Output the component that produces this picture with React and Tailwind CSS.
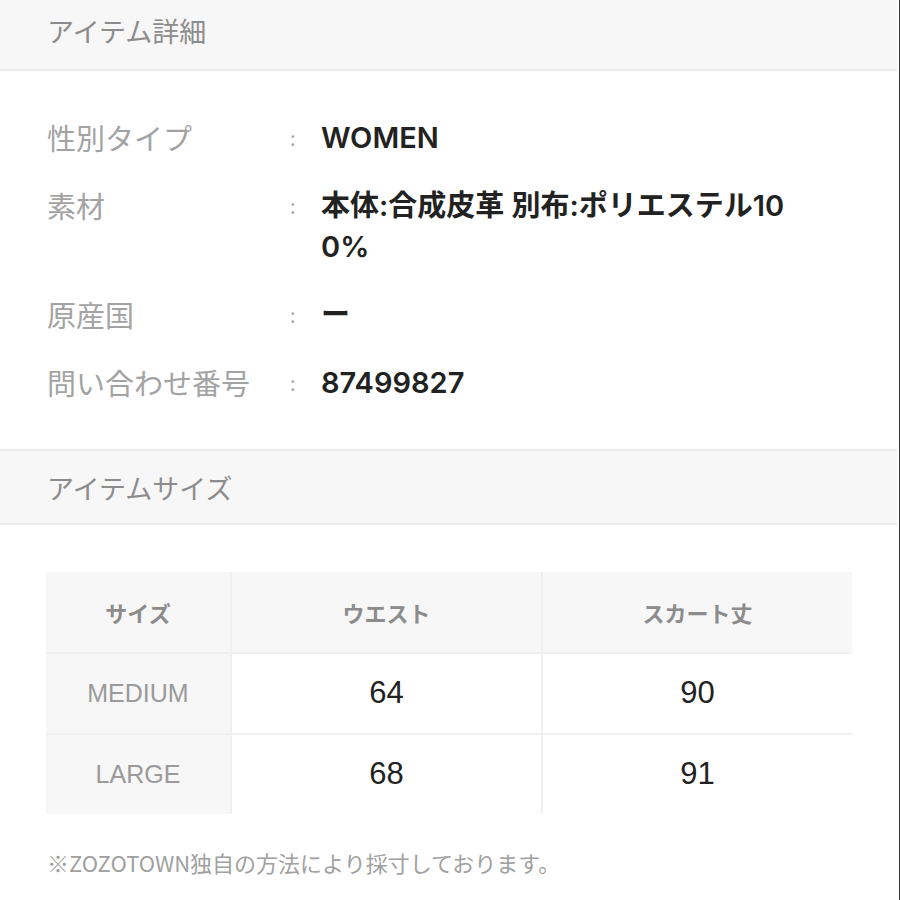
import React from "react";

const font = "font-['Liberation_Sans','Noto_Sans_CJK_JP',sans-serif]";
const jp = "font-['Noto_Sans_CJK_JP',sans-serif]";
const val = "font-['Inter','Noto_Sans_CJK_JP',sans-serif]";

const details = [
  { label: "性別タイプ", value: "WOMEN" },
  { label: "素材", value: "本体:合成皮革 別布:ポリエステル100%" },
  { label: "原産国", value: "ー" },
  { label: "問い合わせ番号", value: "87499827" },
];

const sizes = [
  { name: "MEDIUM", waist: "64", length: "90" },
  { name: "LARGE", waist: "68", length: "91" },
];

const SectionHeader = ({ title, className = "" }) => (
  <div
    className={`bg-[#f7f7f7] border-b-2 border-[#ececec] flex items-center pl-[47px] ${className}`}
  >
    <h2 className={`${jp} text-[27px] text-[#8c8c8c] font-normal leading-none`}>
      {title}
    </h2>
  </div>
);

const App = () => {
  return (
    <div className="w-[900px] h-[900px] bg-white border-r border-[#3a3a3a] overflow-hidden">
      <div className="pr-[2px]">
        <SectionHeader title="アイテム詳細" className="h-[71px] pb-[8px]" />

        {/* detail rows */}
        <div className="pt-[46px] pb-[46px] flex flex-col gap-[27px]">
          {details.map((d) => (
            <div key={d.label} className="flex pl-[47px]">
              <div
                className={`${jp} w-[243px] text-[29px] leading-[41px] text-[#a3a3a3]`}
              >
                {d.label}
              </div>
              <div className={`${jp} w-[31px] text-[20px] leading-[41px] text-[#a8a8a8]`}>
                :
              </div>
              <div
                className={`${val} w-[490px] text-[29px] leading-[41px] text-[#222] font-semibold break-all`}
              >
                {d.value}
              </div>
            </div>
          ))}
        </div>

        <SectionHeader title="アイテムサイズ" className="h-[76px] border-t-2" />

        {/* size table */}
        <div className="pt-[47px] pl-[46px] pr-[46px]">
          <div className="grid grid-cols-[184px_309px_309px] gap-[2px] bg-[#f0f0f0] w-[806px]">
            <div className={`${jp} h-[80px] bg-[#f7f7f7] flex items-center justify-center text-[22px] font-bold text-[#8c8c8c]`}>
              サイズ
            </div>
            <div className={`${jp} h-[80px] bg-[#f7f7f7] flex items-center justify-center text-[22px] font-bold text-[#8c8c8c]`}>
              ウエスト
            </div>
            <div className={`${jp} h-[80px] bg-[#f7f7f7] flex items-center justify-center text-[22px] font-bold text-[#8c8c8c]`}>
              スカート丈
            </div>
            {sizes.map((s) => (
              <React.Fragment key={s.name}>
                <div className={`${font} h-[79px] bg-[#f7f7f7] flex items-center justify-center text-[25px] text-[#9a9a9a]`}>
                  {s.name}
                </div>
                <div className={`${font} h-[79px] bg-white flex items-center justify-center text-[31px] text-[#222]`}>
                  {s.waist}
                </div>
                <div className={`${font} h-[79px] bg-white flex items-center justify-center text-[31px] text-[#222]`}>
                  {s.length}
                </div>
              </React.Fragment>
            ))}
          </div>
        </div>

        <p className={`${jp} pl-[47px] pt-[32px] text-[22px] text-[#a0a0a0]`}>
          ※ZOZOTOWN独自の方法により採寸しております。
        </p>
      </div>
    </div>
  );
};

export default App;
